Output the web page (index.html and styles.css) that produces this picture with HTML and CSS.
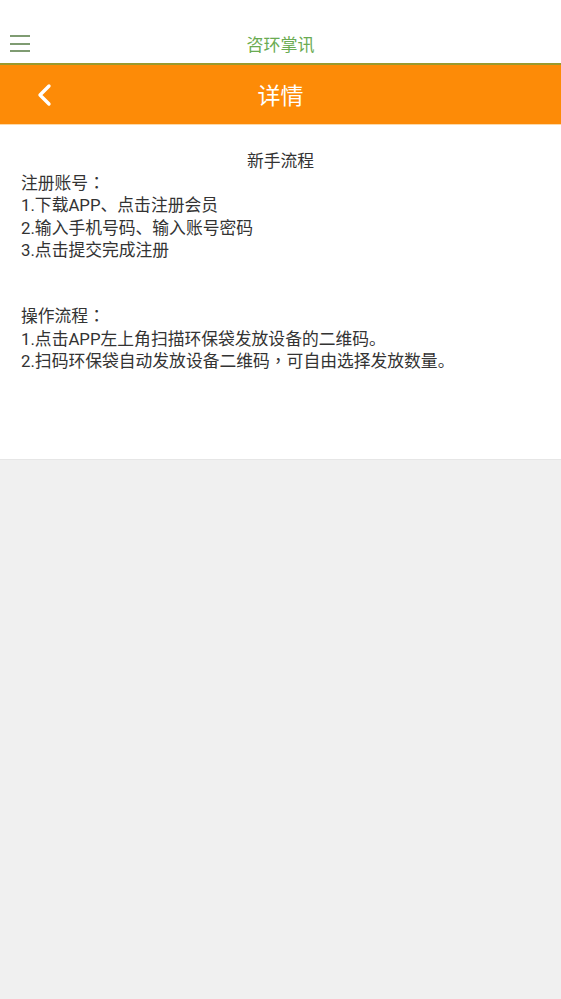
FILE: index.html
```html
<!DOCTYPE html>
<html lang="zh-CN">
<head>
<meta charset="utf-8">
<title>详情</title>
<link rel="stylesheet" href="styles.css">
</head>
<body>
<header class="topbar">
  <div class="menu" aria-label="菜单">
    <span></span><span></span><span></span>
  </div>
  <div class="app-title">咨环掌讯</div>
</header>
<div class="navbar">
  <svg class="back" width="18" height="24" viewBox="0 0 18 24" aria-hidden="true">
    <polyline points="13,3 4,12 13,21" fill="none" stroke="#ffffff" stroke-width="3.4" stroke-linecap="round" stroke-linejoin="round"/>
  </svg>
  <div class="nav-title">详情</div>
</div>
<main class="content">
  <p class="center">新手流程</p>
  <p>注册账号<span class="punc" lang="zh-TW">：</span></p>
  <p>1.下载APP、点击注册会员</p>
  <p>2.输入手机号码、输入账号密码</p>
  <p>3.点击提交完成注册</p>
  <p class="blank">&nbsp;</p>
  <p class="blank">&nbsp;</p>
  <p>操作流程<span class="punc" lang="zh-TW">：</span></p>
  <p>1.点击APP左上角扫描环保袋发放设备的二维码。</p>
  <p>2.扫码环保袋自动发放设备二维码<span class="punc" lang="zh-TW">，</span>可自由选择发放数量。</p>
</main>
</body>
</html>
```
FILE: styles.css
```css
html, body {
  margin: 0;
  padding: 0;
}
body {
  background: #f0f0f0;
  font-family: Roboto, "Noto Sans CJK SC", sans-serif;
  color: #333333;
  min-height: 999px;
}
.topbar {
  position: relative;
  height: 63px;
  background: #ffffff;
  border-bottom: 2px solid #9a9a2e;
  display: flex;
  align-items: center;
  justify-content: center;
}
.menu {
  position: absolute;
  left: 10px;
  top: 35px;
  width: 20px;
  display: flex;
  flex-direction: column;
  gap: 5.5px;
}
.menu span {
  display: block;
  height: 2px;
  background: #7f9c72;
}
.app-title {
  font-size: 17px;
  color: #6aab52;
  margin-top: 24px;
}
.navbar {
  position: relative;
  height: 59px;
  background: #fd8b07;
  border-bottom: 1px solid #fdd9a8;
  display: flex;
  align-items: center;
  justify-content: center;
}
.back {
  position: absolute;
  left: 36px;
  top: 18px;
}
.nav-title {
  font-size: 23px;
  color: #ffffff;
  margin-top: -2px;
}
.content {
  background: #ffffff;
  padding: 25px 21px 87px;
  border-bottom: 1px solid #e6e6e6;
  font-size: 16.8px;
  line-height: 22.2px;
}
.content p {
  margin: 0;
  height: 22.2px;
}
.content .center {
  text-align: center;
}
.punc {
  font-family: "Noto Sans CJK TC", sans-serif;
  line-height: 1;
}
```
